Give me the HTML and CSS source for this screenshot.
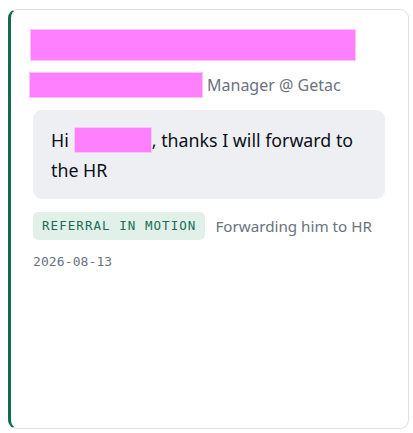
FILE: index.html
```html
<!DOCTYPE html>
<html lang="en">
<head>
    <meta charset="UTF-8">
    <meta name="viewport" content="width=device-width, initial-scale=1.0">
    <title>Referral Note</title>
    <link rel="stylesheet" href="styles.css">
</head>
<body>
    <div class="card">
        <div class="title"><span class="redact redact-title"></span></div>
        <div class="contact">
            <span class="redact redact-name"></span>
            <span class="role">Manager @ Getac</span>
        </div>
        <div class="message"><span class="greet">Hi</span><span class="redact redact-inline"></span>, thanks I will forward to the HR</div>
        <div class="status-row">
            <span class="tag">REFERRAL IN MOTION</span>
            <span class="note">Forwarding him to HR</span>
        </div>
        <div class="date">2026-08-13</div>
    </div>
</body>
</html>
```

FILE: styles.css
```css
body {
    margin: 9px 4px 0 8px;
    font-family: "Noto Sans", "Open Sans", sans-serif;
    background: #fff;
}
.card {
    box-sizing: border-box;
    height: 420px;
    border: 1px solid #dde1e7;
    border-left: 3px solid #0f6b52;
    border-radius: 9px;
    padding: 19px 23px 20px 22px;
    background: #fff;
}
.redact {
    display: inline-block;
    background: #ff80fe;
    box-shadow: 0 0 0 1px #fcc4fb inset;
}
.title {
    height: 32px;
    margin-left: -3px;
}
.redact-title {
    width: 326px;
    height: 32px;
}
.contact {
    display: flex;
    align-items: center;
    margin: 11px 0 0 -4px;
    height: 26px;
}
.redact-name {
    width: 174px;
    height: 26px;
}
.role {
    margin-left: 4px;
    font-size: 16px;
    color: #6b7280;
}
.message {
    margin-top: 12px;
    background: #eeeff3;
    border-radius: 9px;
    padding: 15px 18px 14px;
    font-size: 17.8px;
    line-height: 30px;
    color: #0b0f19;
}
.redact-inline {
    width: 78px;
    height: 26px;
    margin-left: 5px;
    vertical-align: -6px;
}
.status-row {
    display: flex;
    align-items: center;
    margin-top: 13px;
}
.tag {
    background: #e1f1ea;
    color: #1a6b58;
    font-family: "DejaVu Sans Mono", monospace;
    font-size: 12.5px;
    letter-spacing: 1.05px;
    padding: 6px 9px;
    border-radius: 5px;
    line-height: 16px;
}
.note {
    margin-left: 10px;
    font-size: 15.2px;
    color: #6b7280;
}
.date {
    margin-top: 14px;
    font-family: "DejaVu Sans Mono", monospace;
    font-size: 13px;
    color: #6b7280;
    letter-spacing: 0.1px;
}
```
